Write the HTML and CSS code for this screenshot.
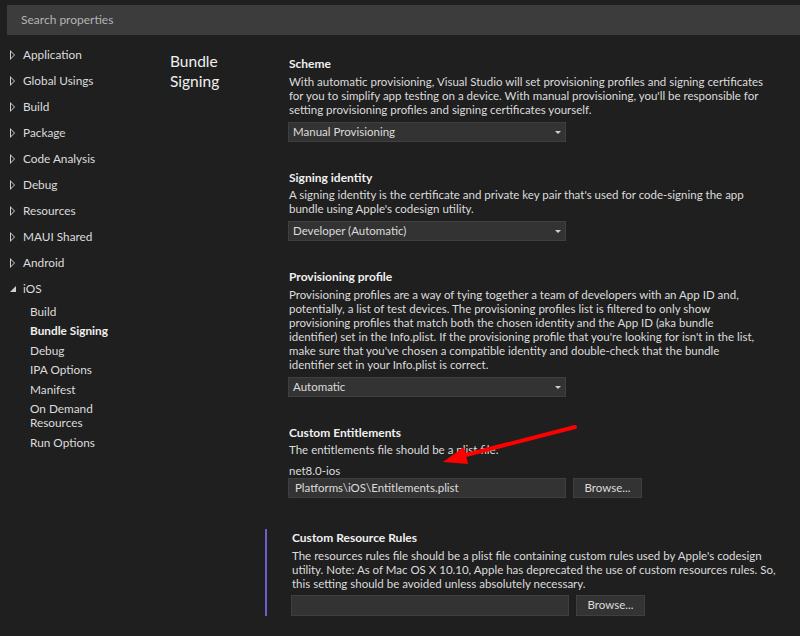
FILE: index.html
```html
<!DOCTYPE html>
<html>
<head>
  <title>Bundle Signing</title>
  <link rel="stylesheet" href="styles.css">
</head>
<body>
  <div class="search-bar">Search properties</div>

  <div class="page">
    <nav class="nav">
      <div class="nav-item"><span class="nav-arrow"></span>Application</div>
      <div class="nav-item"><span class="nav-arrow"></span>Global Usings</div>
      <div class="nav-item"><span class="nav-arrow"></span>Build</div>
      <div class="nav-item"><span class="nav-arrow"></span>Package</div>
      <div class="nav-item"><span class="nav-arrow"></span>Code Analysis</div>
      <div class="nav-item"><span class="nav-arrow"></span>Debug</div>
      <div class="nav-item"><span class="nav-arrow"></span>Resources</div>
      <div class="nav-item"><span class="nav-arrow"></span>MAUI Shared</div>
      <div class="nav-item"><span class="nav-arrow"></span>Android</div>
      <div class="nav-item"><span class="nav-arrow nav-arrow-open"></span>iOS</div>
      <div class="nav-sub">
        <div class="nav-sub-item">Build</div>
        <div class="nav-sub-item active">Bundle Signing</div>
        <div class="nav-sub-item">Debug</div>
        <div class="nav-sub-item">IPA Options</div>
        <div class="nav-sub-item">Manifest</div>
        <div class="nav-sub-item">On Demand<br>Resources</div>
        <div class="nav-sub-item">Run Options</div>
      </div>
    </nav>

    <h1 class="page-title">Bundle<br>Signing</h1>

    <div class="content">
      <div class="setting">
        <div class="setting-title">Scheme</div>
        <div class="setting-description">With automatic provisioning, Visual Studio will set provisioning profiles and signing certificates<br>for you to simplify app testing on a device. With manual provisioning, you'll be responsible for<br>setting provisioning profiles and signing certificates yourself.</div>
        <div class="dropdown">Manual Provisioning<span class="dropdown-caret"></span></div>
      </div>

      <div class="setting">
        <div class="setting-title">Signing identity</div>
        <div class="setting-description">A signing identity is the certificate and private key pair that's used for code-signing the app<br>bundle using Apple's codesign utility.</div>
        <div class="dropdown">Developer (Automatic)<span class="dropdown-caret"></span></div>
      </div>

      <div class="setting">
        <div class="setting-title">Provisioning profile</div>
        <div class="setting-description">Provisioning profiles are a way of tying together a team of developers with an App ID and,<br>potentially, a list of test devices. The provisioning profiles list is filtered to only show<br>provisioning profiles that match both the chosen identity and the App ID (aka bundle<br>identifier) set in the Info.plist. If the provisioning profile that you're looking for isn't in the list,<br>make sure that you've chosen a compatible identity and double-check that the bundle<br>identifier set in your Info.plist is correct.</div>
        <div class="dropdown">Automatic<span class="dropdown-caret"></span></div>
      </div>

      <div class="setting">
        <div class="setting-title">Custom Entitlements</div>
        <div class="setting-description">The entitlements file should be a plist file.</div>
        <div class="setting-sublabel">net8.0-ios</div>
        <div class="file-row">
          <div class="text-input">Platforms\iOS\Entitlements.plist</div>
          <div class="button">Browse...</div>
        </div>
      </div>

      <div class="setting setting-focused">
        <div class="setting-title">Custom Resource Rules</div>
        <div class="setting-description">The resources rules file should be a plist file containing custom rules used by Apple's codesign<br>utility. Note: As of Mac OS X 10.10, Apple has deprecated the use of custom resources rules. So,<br>this setting should be avoided unless absolutely necessary.</div>
        <div class="file-row">
          <div class="text-input"></div>
          <div class="button">Browse...</div>
        </div>
      </div>
    </div>
  </div>

  <!-- annotation arrow -->
  <svg class="annotation" width="800" height="636" viewBox="0 0 800 636">
    <line x1="575" y1="427" x2="462" y2="456" stroke="#ff0000" stroke-width="4" stroke-linecap="round"/>
    <polygon points="443,462 468,464 464,447" fill="#ff0000"/>
  </svg>
</body>
</html>
```

FILE: styles.css
```css
:root {
  --color-background: #1f1f1f;
  --color-field: #333333;
  --color-field-border: #3f3f3f;
  --color-search: #3c3c3c;
  --color-text: #dcdcdc;
  --color-text-strong: #f0f0f0;
  --color-text-muted: #b4b4b4;
  --color-focus: #6a5fd0;

  --font-family: Lato, "Open Sans", "Noto Sans", sans-serif;
}

html, body {
  margin: 0;
  height: 100%;
  overflow: hidden;
}

body {
  position: relative;
  background-color: var(--color-background);
  color: var(--color-text);
  font-family: var(--font-family);
  font-size: 11.5px;
  line-height: 14px;
}

.search-bar {
  margin: 5px 0 0 7px;
  height: 30px;
  line-height: 30px;
  padding-left: 14px;
  background-color: var(--color-search);
  color: var(--color-text-muted);
  font-size: 12px;
}

.page {
  display: flex;
  padding-top: 7px;
}

/* Left navigation */
.nav {
  width: 162px;
  padding-left: 8px;
  flex-shrink: 0;
  font-size: 11.8px;
}

.nav-item {
  display: flex;
  align-items: center;
  height: 26px;
  color: var(--color-text);
}

.nav-arrow {
  width: 0;
  height: 0;
  margin: 0 8px 0 2px;
  position: relative;
  border-top: 5px solid transparent;
  border-bottom: 5px solid transparent;
  border-left: 5px solid #d0d0d0;
}

.nav-arrow:after {
  content: "";
  position: absolute;
  left: -4px;
  top: -3px;
  border-top: 3px solid transparent;
  border-bottom: 3px solid transparent;
  border-left: 3px solid var(--color-background);
}

.nav-arrow-open {
  border: 0;
  width: 0;
  height: 0;
  margin: 0 7px 0 2px;
  border-left: 6px solid transparent;
  border-bottom: 6px solid #d0d0d0;
}

.nav-arrow-open:after {
  display: none;
}

.nav-sub {
  padding-left: 22px;
}

.nav-sub-item {
  padding: 2.75px 0;
}

.nav-sub-item.active {
  font-weight: 700;
  color: var(--color-text-strong);
}

/* Page heading */
.page-title {
  width: 95px;
  flex-shrink: 0;
  margin: 0;
  padding-top: 9px;
  font-size: 15.5px;
  line-height: 20px;
  font-weight: 400;
  color: var(--color-text-strong);
}

/* Settings */
.content {
  width: 510px;
}

.setting {
  border-left: 2px solid transparent;
  padding-left: 22px;
  margin-bottom: 27px;
}

.setting:first-child {
  padding-top: 13px;
}

.setting-focused {
  border-left-color: var(--color-focus);
  padding-left: 25px;
  margin-top: 31px;
}

.setting-title {
  font-size: 12px;
  font-weight: 700;
  line-height: 16px;
  padding-top: 1px;
  margin-bottom: 2.5px;
  color: var(--color-text-strong);
}

.setting-description {
  white-space: nowrap;
}

.setting-sublabel {
  margin-top: 7px;
}

.dropdown,
.text-input {
  position: relative;
  box-sizing: border-box;
  width: 278px;
  height: 20px;
  line-height: 18px;
  padding: 0 4px;
  margin-left: -1px;
  background-color: var(--color-field);
  border: 1px solid var(--color-field-border);
  color: var(--color-text);
}

.dropdown {
  margin-top: 5px;
}

.dropdown-caret {
  position: absolute;
  right: 4px;
  top: 8px;
  border-left: 3px solid transparent;
  border-right: 3px solid transparent;
  border-top: 3px solid #d0d0d0;
}

.text-input {
  padding-left: 6px;
}

.file-row {
  display: flex;
  gap: 7px;
}

.setting-focused .file-row {
  margin-top: 4px;
}

.setting-focused .text-input {
  height: 21px;
}

.button {
  box-sizing: border-box;
  width: 69px;
  height: 20px;
  line-height: 18px;
  text-align: center;
  background-color: var(--color-field);
  border: 1px solid var(--color-field-border);
  color: var(--color-text);
}

.setting-focused .button {
  height: 21px;
}

.annotation {
  position: absolute;
  top: 0;
  left: 0;
  pointer-events: none;
}
```
